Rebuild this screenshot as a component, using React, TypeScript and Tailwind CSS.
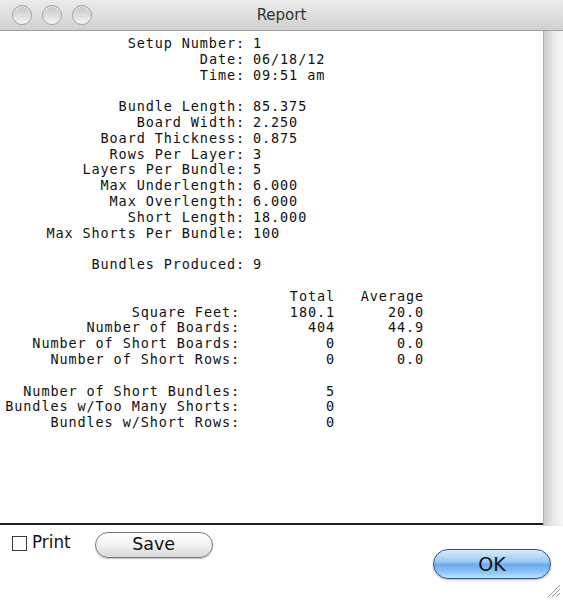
import * as React from "react";

type Row = [string, string] | null;
type TotalRow = [string, string, string] | null;

const setupRows: Row[] = [
  ["Setup Number:", "1"],
  ["Date:", "06/18/12"],
  ["Time:", "09:51 am"],
  null,
  ["Bundle Length:", "85.375"],
  ["Board Width:", "2.250"],
  ["Board Thickness:", "0.875"],
  ["Rows Per Layer:", "3"],
  ["Layers Per Bundle:", "5"],
  ["Max Underlength:", "6.000"],
  ["Max Overlength:", "6.000"],
  ["Short Length:", "18.000"],
  ["Max Shorts Per Bundle:", "100"],
  null,
  ["Bundles Produced:", "9"],
  null,
];

const totalRows: TotalRow[] = [
  ["", "Total", "Average"],
  ["Square Feet:", "180.1", "20.0"],
  ["Number of Boards:", "404", "44.9"],
  ["Number of Short Boards:", "0", "0.0"],
  ["Number of Short Rows:", "0", "0.0"],
  null,
  ["Number of Short Bundles:", "5", ""],
  ["Bundles w/Too Many Shorts:", "0", ""],
  ["Bundles w/Short Rows:", "0", ""],
];

const TrafficLight: React.FC = () => (
  <div className="w-[20px] h-[20px] rounded-full border border-[#a3a3a3] bg-gradient-to-b from-[#c6c6c6] via-[#dcdcdc] to-[#f6f6f6] shadow-[inset_0_1px_1px_rgba(255,255,255,0.6)]" />
);

const App: React.FC = () => {
  return (
    <div className="w-[563px] h-[600px] bg-white flex flex-col overflow-hidden font-['DejaVu_Sans',sans-serif]">
      {/* Title bar */}
      <div className="h-[31px] grid grid-cols-[1fr_auto_1fr] items-center bg-gradient-to-b from-[#ececec] to-[#d0d0d0] border-b border-[#a2a2a2]">
        <div className="flex items-center gap-[10px] pl-[12px]">
          <TrafficLight />
          <TrafficLight />
          <TrafficLight />
        </div>
        <div className="text-[15px] text-[#333]">Report</div>
        <div />
      </div>

      {/* Report body + scroller */}
      <div className="flex h-[495px]">
        <div className="flex-1 h-[494px] border-b-2 border-[#1e1e1e] pt-[5px] font-['DejaVu_Sans_Mono',monospace] text-[13.5px] tracking-[0.9px] leading-[15.8px] text-[#111] whitespace-pre">
          <div className="grid grid-cols-[245px_auto] gap-x-[8px]">
            {setupRows.map((row, i) =>
              row ? (
                <React.Fragment key={i}>
                  <div className="text-right">{row[0]}</div>
                  <div>{row[1]}</div>
                </React.Fragment>
              ) : (
                <div key={i} className="col-span-2 h-[15.8px]" />
              )
            )}
          </div>
          <div className="grid grid-cols-[240px_95px_89px]">
            {totalRows.map((row, i) =>
              row ? (
                <React.Fragment key={i}>
                  <div className="text-right">{row[0]}</div>
                  <div className="text-right">{row[1]}</div>
                  <div className="text-right">{row[2]}</div>
                </React.Fragment>
              ) : (
                <div key={i} className="col-span-3 h-[15.8px]" />
              )
            )}
          </div>
        </div>
        <div className="w-[20px] h-full border-l border-[#b0b0b0] bg-gradient-to-r from-[#cdcdcd] via-[#e8e8e8] to-[#f8f8f8]" />
      </div>

      {/* Footer controls */}
      <div className="flex-1 flex justify-between">
        <div className="flex items-center h-[26px] mt-[6px] pl-[12px]">
          <div className="w-[15px] h-[15px] border border-[#3c3c3c] bg-white mt-[-3px]" />
          <span className="ml-[5px] text-[16.8px] text-[#111] mt-[-5px]">Print</span>
          <button className="ml-[24px] w-[118px] h-[26px] rounded-full border border-[#7a7a7a] bg-gradient-to-b from-white via-[#f2f2f2] to-[#d8d8d8] shadow-[0_1px_1px_rgba(0,0,0,0.25)] text-[17.5px] text-[#111] leading-none">
            Save
          </button>
        </div>
        <div className="flex flex-col items-end">
          <button className="mt-[23px] mr-[12px] w-[118px] h-[30px] rounded-full border border-[#34528c] bg-[linear-gradient(to_bottom,#d6ebfd_0%,#9fcbf6_40%,#6faaec_52%,#8cc6f8_80%,#c2e6ff_100%)] shadow-[0_1px_2px_rgba(0,0,0,0.3)] text-[19px] text-[#111] leading-none">
            OK
          </button>
          <svg width="18" height="18" viewBox="0 0 18 18" className="mt-auto mb-[2px] mr-[2px]">
            <line x1="17" y1="5" x2="5" y2="17" stroke="#9a9a9a" strokeWidth="1" />
            <line x1="17" y1="9" x2="9" y2="17" stroke="#9a9a9a" strokeWidth="1" />
            <line x1="17" y1="13" x2="13" y2="17" stroke="#9a9a9a" strokeWidth="1" />
          </svg>
        </div>
      </div>
    </div>
  );
};

export default App;
